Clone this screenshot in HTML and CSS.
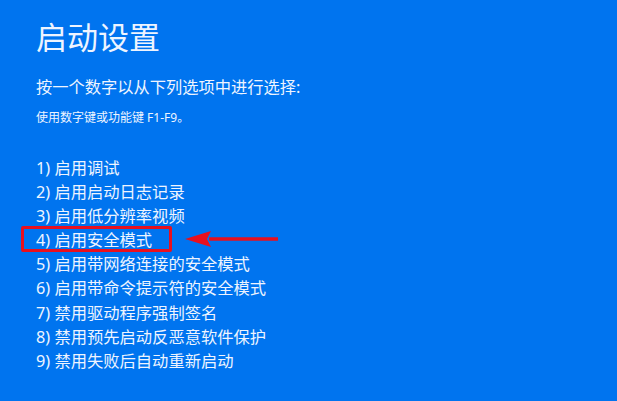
FILE: index.html
```html
<!DOCTYPE html>
<html lang="zh-CN">
<head>
<meta charset="utf-8">
<link rel="stylesheet" href="styles.css">
</head>
<body>
<main class="screen">
  <h1 class="title">启动设置</h1>
  <p class="prompt">按一个数字以从下列选项中进行选择:</p>
  <p class="hint">使用数字键或功能键 F1-F9。</p>
  <ol class="options">
    <li>1) 启用调试</li>
    <li>2) 启用启动日志记录</li>
    <li>3) 启用低分辨率视频</li>
    <li class="marked">4) 启用安全模式
      <span class="box"></span>
      <svg class="arrow" width="100" height="18" viewBox="0 0 100 18"><path d="M24 7.2 L93 7.2 L93 10.8 L24 10.8 Z" fill="#e8101e"/><path d="M0 9 L26 1 L22 9 L26 17 Z" fill="#e8101e"/></svg>
    </li>
    <li>5) 启用带网络连接的安全模式</li>
    <li>6) 启用带命令提示符的安全模式</li>
    <li>7) 禁用驱动程序强制签名</li>
    <li>8) 禁用预先启动反恶意软件保护</li>
    <li>9) 禁用失败后自动重新启动</li>
  </ol>
</main>
</body>
</html>
```
FILE: styles.css
```css
html, body {
  margin: 0;
  padding: 0;
  height: 100%;
}
body {
  background: #0074ef;
  color: #eef4ff;
  font-family: "Noto Sans", "Noto Sans CJK SC", sans-serif;
  overflow: hidden;
}
.screen {
  padding: 16px 0 0 36px;
  display: flex;
  flex-direction: column;
}
.title {
  margin: 0;
  font-size: 31px;
  font-weight: 400;
  line-height: 42px;
}
.prompt {
  margin: 19px 0 0 0;
  font-size: 16.25px;
  line-height: 20px;
  font-weight: 400;
}
.hint {
  margin: 13px 0 0 0;
  font-size: 12px;
  line-height: 16px;
}
.options {
  list-style: none;
  margin: 30px 0 0 0;
  padding: 0;
  font-size: 16.3px;
  line-height: 24.1px;
}
.options li {
  position: relative;
}
.box {
  position: absolute;
  left: -15px;
  top: -2px;
  width: 145px;
  height: 20px;
  border: 3px solid #e8101e;
  border-radius: 2px;
}
.arrow {
  position: absolute;
  left: 149px;
  top: 2px;
}
```
